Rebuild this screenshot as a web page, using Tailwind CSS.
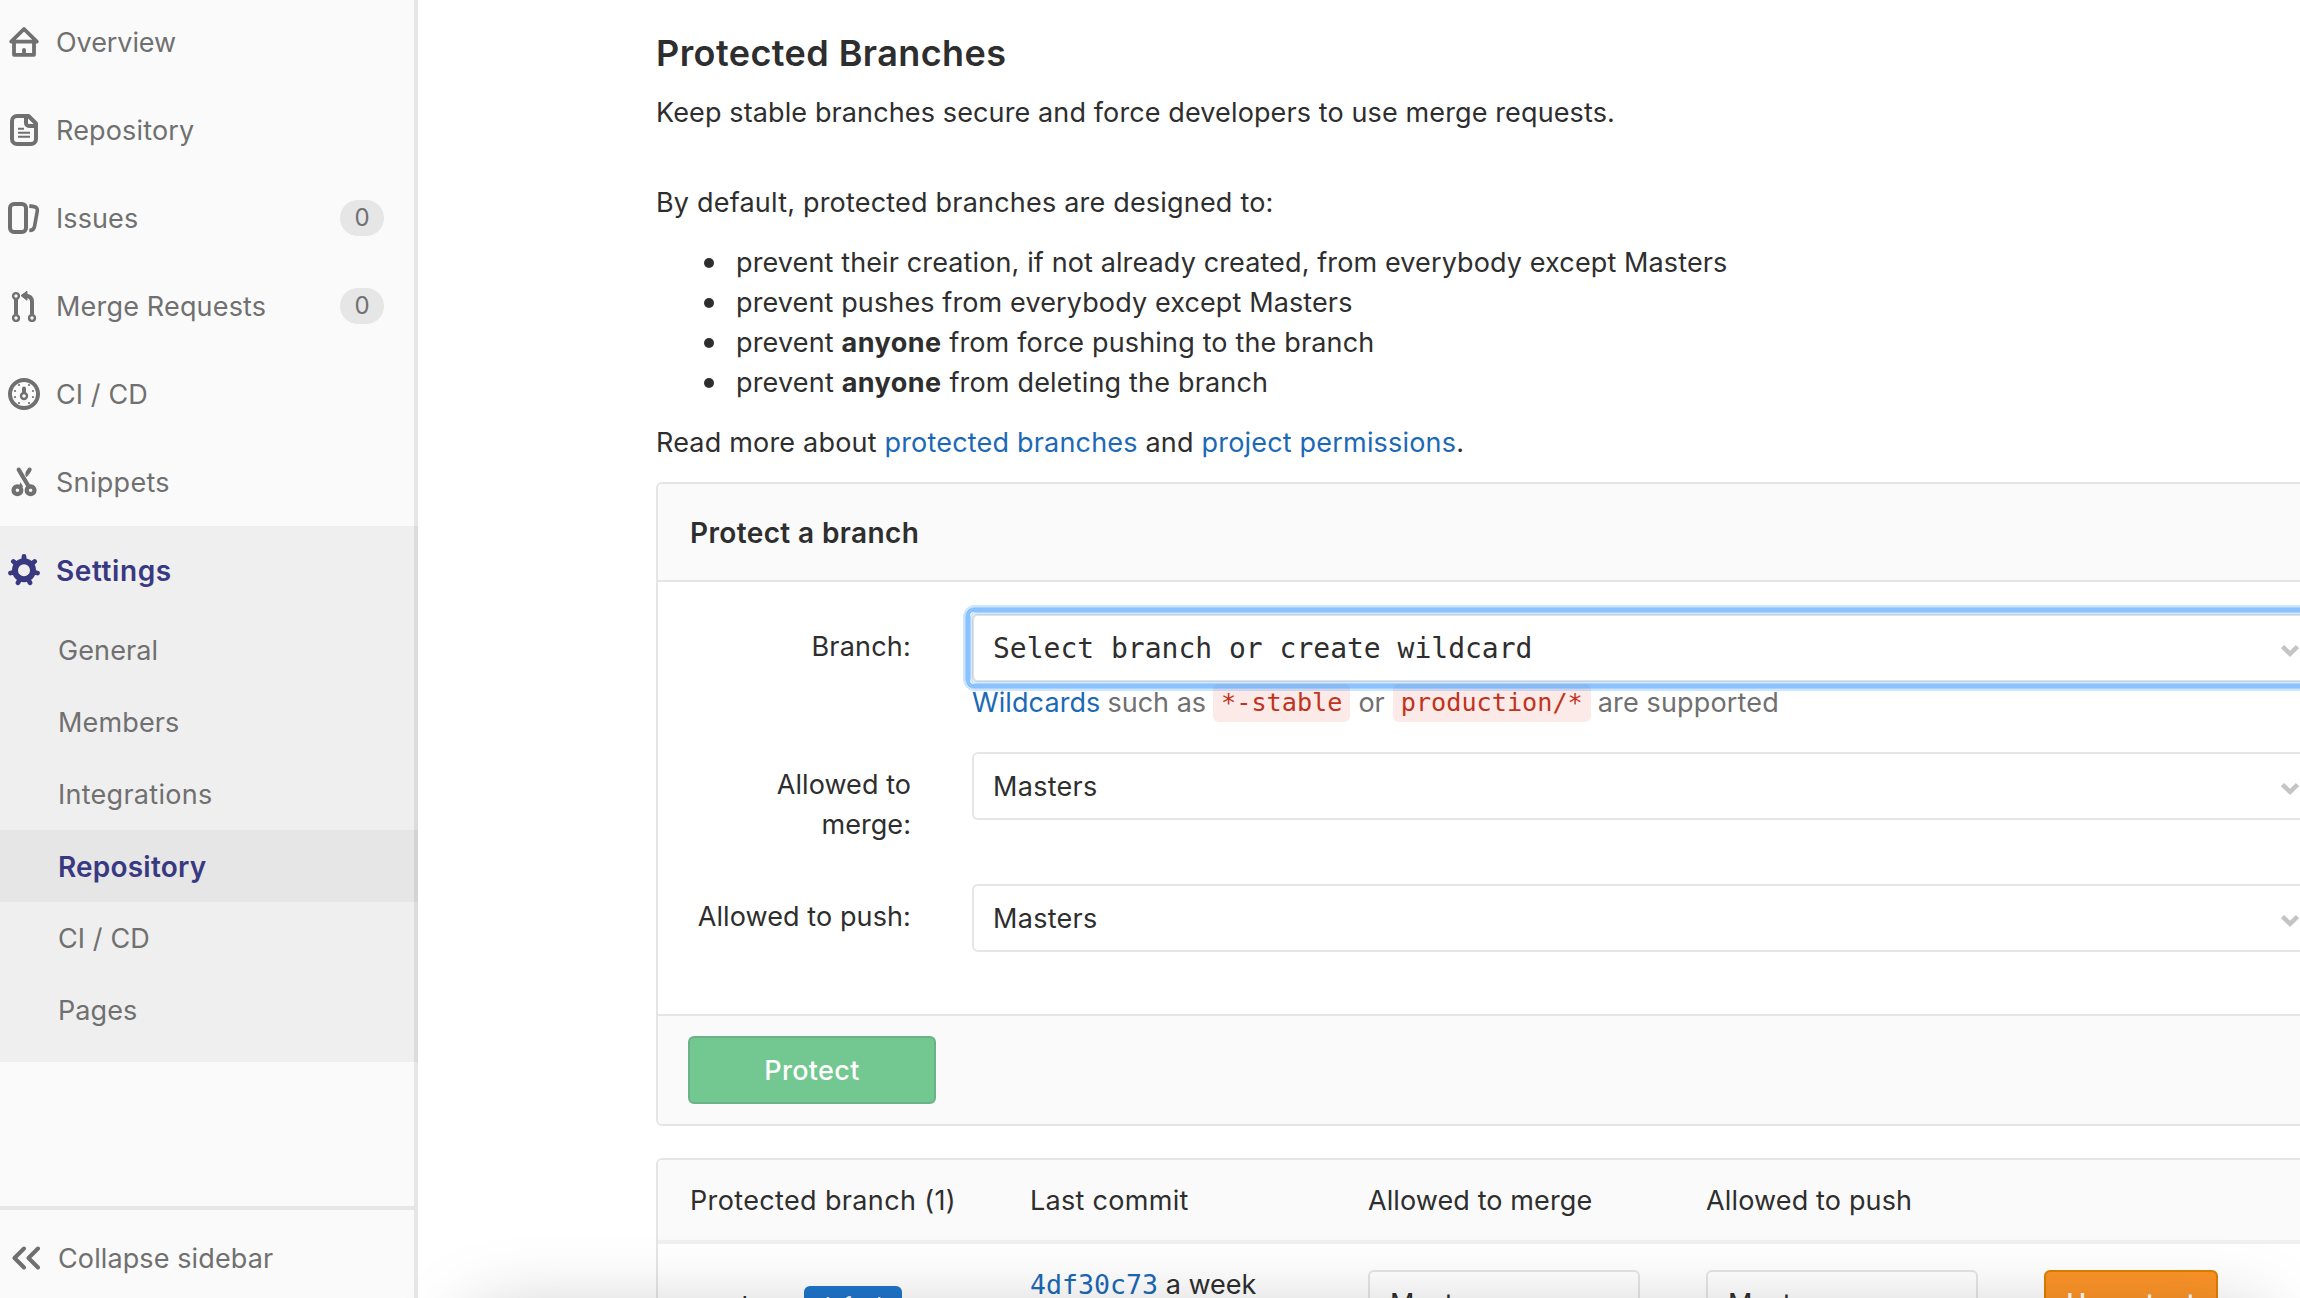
<!DOCTYPE html>
<html lang="en">
<head>
<meta charset="utf-8">
<title>Repository Settings</title>
<script src="https://cdn.jsdelivr.net/npm/@tailwindcss/browser@4"></script>
</head>
<body class="bg-white font-['Inter',sans-serif] text-[27px] leading-[40px] text-[#2e2e2e]">
<div class="relative flex h-[1298px] w-[2300px] overflow-hidden">

  <!-- Sidebar -->
  <aside class="relative flex h-[1298px] w-[418px] shrink-0 flex-col bg-[#fafafa] text-[#707070]">
    <nav class="-mt-0.5">
      <a class="flex h-[88px] items-center pl-2">
        <svg class="size-8" viewBox="0 0 32 32" fill="none" stroke="#707070" stroke-width="3.8" stroke-linejoin="round" stroke-linecap="round"><path d="M3.2 15.6 16 3l12.8 12.6z"/><path d="M6 16v12.8h20V16"/><path d="M16 28v-4.2"/></svg>
        <span class="ml-4 pt-0.5 tracking-[-0.08px]">Overview</span>
      </a>
      <a class="flex h-[88px] items-center pl-2">
        <svg class="size-8" viewBox="0 0 32 32" fill="none" stroke="#707070" stroke-width="4"><path d="M20.5 2H9a5 5 0 0 0-5 5v18a5 5 0 0 0 5 5h14a5 5 0 0 0 5-5V9.5z" stroke-linejoin="round"/><path d="M18 2v7a3 3 0 0 0 3 3h7"/><path d="M10 14.8h6M10 18.7h12M10 22.8h12" stroke-width="2"/></svg>
        <span class="ml-4 pt-0.5 tracking-[0.16px]">Repository</span>
      </a>
      <a class="flex h-[88px] items-center pl-2">
        <svg class="size-8" viewBox="0 0 32 32" fill="none" stroke="#707070" stroke-width="4"><rect x="2" y="2" width="16" height="28" rx="4"/><path d="M21.3 3.9l4.6.7c2.6.4 3.8 2 3.4 4.4L26.5 24.6c-.5 2.7-2 3.800-5.200 3.900" stroke-width="3.6"/></svg>
        <span class="ml-4 pt-0.5 tracking-[0.1px]">Issues</span>
        <span class="mr-[34px] ml-auto flex h-9 w-11 items-center justify-center rounded-full bg-[#e6e6e6] text-2xl">0</span>
      </a>
      <a class="flex h-[88px] items-center pl-2">
        <svg class="size-8" viewBox="0 0 32 32" fill="none" stroke="#707070"><g stroke-width="2.4"><circle cx="8" cy="6" r="2.9"/><circle cx="8" cy="28" r="2.9"/><circle cx="24" cy="28" r="2.9"/></g><path d="M8 9.5v15M24 24.5V12c0-4-2-6-6-6.3" stroke-width="4"/><path d="M13 5.6l6-4.300v9z" fill="#707070" stroke-width="1" stroke-linejoin="round"/></svg>
        <span class="ml-4 pt-0.5 tracking-[0.18px]">Merge Requests</span>
        <span class="mr-[34px] ml-auto flex h-9 w-11 items-center justify-center rounded-full bg-[#e6e6e6] text-2xl">0</span>
      </a>
      <a class="flex h-[88px] items-center pl-2">
        <svg class="size-8" viewBox="0 0 32 32" fill="none" stroke="#707070"><circle cx="16" cy="16" r="14" stroke-width="4"/><circle cx="16" cy="18" r="3" stroke-width="2.4"/><path d="M16 10.5V14" stroke-width="4" stroke-linecap="round"/><g fill="#707070" stroke="none"><circle cx="11" cy="7" r="1.1"/><circle cx="21" cy="7" r="1.1"/><circle cx="7" cy="13" r="1.1"/><circle cx="25" cy="13" r="1.1"/><circle cx="7" cy="19" r="1.1"/><circle cx="25" cy="19" r="1.1"/><circle cx="11" cy="25" r="1.1"/><circle cx="21" cy="25" r="1.1"/></g></svg>
        <span class="ml-4 pt-0.5 tracking-[0.1px]">CI / CD</span>
      </a>
      <a class="flex h-[88px] items-center pl-2">
        <svg class="size-8" viewBox="0 0 32 32" fill="none" stroke="#707070" stroke-width="4.2"><circle cx="9.4" cy="24.3" r="3.9"/><circle cx="22.6" cy="24.3" r="3.9"/><path d="M10.7 3.6 21 21" stroke-linecap="round"/><path d="M21.6 3.6l-2 3.2" stroke-linecap="round"/><path d="M16.8 7.2l3.8 2.2-2.4 1.6zM12.5 16.2l2.8 4.6h-4.6z" fill="#707070" stroke="none"/></svg>
        <span class="ml-4 pt-0.5 tracking-[0.3px]">Snippets</span>
      </a>
      <!-- Active section -->
      <div class="bg-[#efefef] pb-4">
        <a class="flex h-[88px] items-center pl-2 text-[28px] font-semibold text-[#393982]">
          <svg class="size-8" viewBox="0 0 32 32" fill="none" stroke="#393982"><circle cx="16" cy="16.2" r="9" stroke-width="6"/><path d="M16 5.5V2.4M24.3 9.4l2.3-1.9M26.3 18.3l3.2.7M20.7 26.2l1.3 2.6M11.3 26.2 10 28.800M5.700 18.300l-3.200.7M7.700 9.400 5.400 7.500" stroke-width="4.8" stroke-linecap="round"/></svg>
          <span class="ml-4 pt-0.5 tracking-[0.6px]">Settings</span>
        </a>
        <a class="flex h-[72px] items-center pt-0.5 pl-[58px] tracking-[0.1px]">General</a>
        <a class="flex h-[72px] items-center pt-0.5 pl-[58px] tracking-[0.15px]">Members</a>
        <a class="flex h-[72px] items-center pt-0.5 pl-[58px] tracking-[0.27px]">Integrations</a>
        <a class="flex h-[72px] items-center bg-[#e6e6e6] pt-0.5 pl-[58px] text-[28px] font-semibold tracking-[0.2px] text-[#393982]">Repository</a>
        <a class="flex h-[72px] items-center pt-0.5 pl-[58px] tracking-[0.1px]">CI / CD</a>
        <a class="flex h-[72px] items-center pt-0.5 pl-[58px] tracking-[0.1px]">Pages</a>
      </div>
    </nav>
    <div class="mt-auto mr-1 flex h-[92px] items-center border-t-4 border-[#e6e6e6] pt-2 pl-3">
      <svg class="h-6 w-7" viewBox="0 0 28 24" fill="none" stroke="#707070" stroke-width="4" stroke-linecap="round" stroke-linejoin="round"><path d="M12 2.5 2.5 12l9.5 9.5M26 2.5 16.5 12l9.5 9.500"/></svg>
      <span class="ml-[18px] pt-0.5 tracking-[0.11px]">Collapse sidebar</span>
    </div>
    <div class="absolute inset-y-0 right-0 w-1 bg-black/8"></div>
  </aside>

  <!-- Main content -->
  <main class="ml-[238px] w-[1900px] shrink-0 pt-7">
    <h4 class="text-[36px] leading-[50px] font-semibold tracking-[0.42px]">Protected Branches</h4>
    <p class="mt-[15px] tracking-[0.12px]">Keep stable branches secure and force developers to use merge requests.</p>
    <p class="mt-[50px] tracking-[0.2px]">By default, protected branches are designed to:</p>
    <ul class="mt-5 tracking-[0.12px]">
      <li class="flex items-center"><i class="mr-[22px] ml-12 size-2.5 rounded-full bg-[#2e2e2e]"></i><span>prevent their creation, if not already created, from everybody except Masters</span></li>
      <li class="flex items-center"><i class="mr-[22px] ml-12 size-2.5 rounded-full bg-[#2e2e2e]"></i><span>prevent pushes from everybody except Masters</span></li>
      <li class="flex items-center"><i class="mr-[22px] ml-12 size-2.5 rounded-full bg-[#2e2e2e]"></i><span class="tracking-[0.16px]">prevent <strong class="font-bold tracking-[0.45px]">anyone</strong> from force pushing to the branch</span></li>
      <li class="flex items-center"><i class="mr-[22px] ml-12 size-2.5 rounded-full bg-[#2e2e2e]"></i><span class="tracking-[0.18px]">prevent <strong class="font-bold tracking-[0.45px]">anyone</strong> from deleting the branch</span></li>
    </ul>
    <p class="mt-5 tracking-[0.19px]">Read more about <a class="text-[#1b69b6]">protected branches</a> and <a class="text-[#1b69b6]">project permissions</a>.</p>

    <!-- Protect a branch -->
    <section class="mt-[19px] rounded-md border-2 border-[#e5e5e5]">
      <header class="flex h-[98px] items-center rounded-t border-b-2 border-[#e5e5e5] bg-[#fafafa] pt-0.5 pl-8 text-[28px] font-semibold tracking-[0.38px]">Protect a branch</header>
      <div class="h-[432px] pt-8">
        <div class="flex h-[138px]">
          <label class="w-[253px] pt-[13px] text-right tracking-[0.2px]">Branch:</label>
          <div class="ml-[61px] w-[1342px]">
            <div class="relative z-10 flex h-[68px] items-center rounded-md border-2 border-[#e2e2e2] bg-white pl-[19px] font-['DejaVu_Sans_Mono',monospace] text-[28px]">
              <span class="pt-px">Select branch or create wildcard</span>
              <svg class="ml-[749px] h-3.5 w-[18px] translate-y-[3px]" viewBox="0 0 18 14" fill="none" stroke="#c4c4c4" stroke-width="4.5"><path d="M1.5 2.5 9 9.800l7.500-7.300"/></svg>
              <!-- Focus ring, from the outside in -->
              <div class="pointer-events-none absolute -inset-[11px] rounded-xl border-2 border-[#3b99fc]/25">
                <div class="size-full rounded-[10px] border border-[#3b99fc]/45">
                  <div class="size-full rounded-lg border-4 border-[#3b99fc]/60">
                    <div class="size-full rounded-md border border-[#3b99fc]/42">
                      <div class="size-full rounded-md border-2 border-[#3b99fc]/22"></div>
                    </div>
                  </div>
                </div>
              </div>
            </div>
            <p class="flex text-[#707070]"><a class="pt-px tracking-[0.1px] text-[#1b69b6]">Wildcards</a><span class="ml-[7px] pt-px">such as</span><code class="mt-0.5 ml-[7px] h-[38px] rounded-md bg-[#fbe9e7]/95 px-2 font-['DejaVu_Sans_Mono',monospace] text-[25.2px] leading-[38px] text-[#c0341d]">*-stable</code><span class="mx-2 pt-px">or</span><code class="mt-0.5 h-[38px] rounded-md bg-[#fbe9e7]/95 px-2 font-['DejaVu_Sans_Mono',monospace] text-[25.2px] leading-[38px] text-[#c0341d]">production/*</code><span class="ml-[7px] pt-px tracking-[0.15px]">are supported</span></p>
          </div>
        </div>
        <div class="flex h-[132px]">
          <label class="w-[253px] pt-[13px] pl-8 text-right tracking-[0.05px]">Allowed to<br>merge:</label>
          <div class="ml-[61px] flex h-[68px] w-[1342px] items-center rounded-md border-2 border-[#e5e5e5] pl-[19px]">
            <span class="w-[1288px] pt-0.5 tracking-[0.29px]">Masters</span>
            <svg class="h-3.5 w-[18px] translate-y-[3px]" viewBox="0 0 18 14" fill="none" stroke="#c4c4c4" stroke-width="4.5"><path d="M1.5 2.5 9 9.800l7.500-7.300"/></svg>
          </div>
        </div>
        <div class="flex">
          <label class="w-[253px] pt-[13px] text-right tracking-[0.1px]">Allowed to push:</label>
          <div class="ml-[61px] flex h-[68px] w-[1342px] items-center rounded-md border-2 border-[#e5e5e5] pl-[19px]">
            <span class="w-[1288px] pt-0.5 tracking-[0.29px]">Masters</span>
            <svg class="h-3.5 w-[18px] translate-y-[3px]" viewBox="0 0 18 14" fill="none" stroke="#c4c4c4" stroke-width="4.5"><path d="M1.5 2.5 9 9.800l7.500-7.300"/></svg>
          </div>
        </div>
      </div>
      <footer class="flex h-[110px] items-center rounded-b border-t-2 border-[#e5e5e5] bg-[#fafafa] pl-[30px]">
        <button class="h-[68px] w-[248px] rounded-md border-2 border-[#6cb288] bg-[#73c790] pt-0.5 font-medium tracking-[0.34px] text-white">Protect</button>
      </footer>
    </section>

    <!-- Protected branches table -->
    <section class="mt-8 h-[200px] rounded-md border-2 border-[#e5e5e5]">
      <div class="grid h-[84px] grid-cols-[340px_338px_338px_338px_338px] items-center rounded-t border-b-4 border-[#f0f0f0] bg-[#fafafa] pt-0.5">
        <span class="pl-8 tracking-[0.36px]">Protected branch (1)</span>
        <span class="pl-8 tracking-[0.3px]">Last commit</span>
        <span class="pl-8 tracking-[0.1px]">Allowed to merge</span>
        <span class="pl-8 tracking-[0.15px]">Allowed to push</span>
      </div>
      <div class="grid grid-cols-[340px_338px_338px_338px_338px] items-start">
        <div class="flex pt-[42px] pl-8"><span class="font-['DejaVu_Sans_Mono',monospace] text-[26.6px]">master</span><span class="ml-[18px] h-[38px] w-[98px] rounded-md bg-[#1f75cb] text-center text-[22px] leading-[38px] text-white">default</span></div>
        <div class="pt-[21px] pl-8"><a class="font-['DejaVu_Sans_Mono',monospace] text-[26.6px] tracking-normal text-[#1b69b6]">4df30c73</a> a week</div>
        <div class="pt-[26px] pl-8"><div class="flex h-[68px] w-[272px] items-center rounded-md border-2 border-[#e5e5e5] pl-5 tracking-[0.29px]">Masters</div></div>
        <div class="pt-[26px] pl-8"><div class="flex h-[68px] w-[272px] items-center rounded-md border-2 border-[#e5e5e5] pl-5 tracking-[0.29px]">Masters</div></div>
        <div class="pt-[26px] pl-8"><button class="h-[68px] w-[174px] rounded-md border-2 border-[#de7e00] bg-[#fc9428] font-medium tracking-[0.1px] text-white">Unprotect</button></div>
      </div>
    </section>
  </main>

  <!-- Soft shadow rising from the bottom edge -->
  <div class="pointer-events-none absolute top-[1320px] left-[475px] h-[200px] w-[1785px] shadow-[0_0_80px_rgba(0,0,0,0.27)]"></div>
</div>
</body>
</html>
